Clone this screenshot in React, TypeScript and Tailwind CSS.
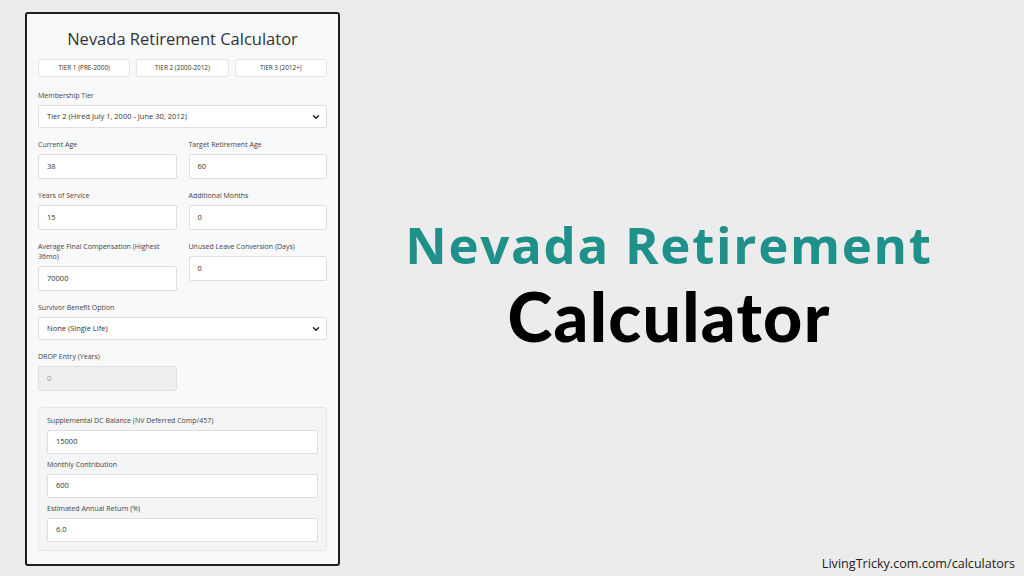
import { ChevronDown } from 'lucide-react';

const labelCls = 'block text-[7px] leading-[10px] text-[#444]';
const inputCls =
    'mt-1 flex h-[25px] w-full items-center rounded-[2px] border border-[#dcdfe3] bg-white px-2 text-[7.5px] text-[#333]';

const Field: React.FC<{ label: string; value: string; disabled?: boolean; small?: boolean }> = ({
    label,
    value,
    disabled,
    small,
}) => (
    <div>
        <span className={labelCls}>{label}</span>
        <div
            className={
                'mt-1 flex w-full items-center rounded-[2px] border border-[#dcdfe3] px-2 text-[7.5px] ' +
                (small ? 'h-[24px] ' : 'h-[25px] ') +
                (disabled ? 'bg-[#efefef] text-[#999]' : 'bg-white text-[#333]')
            }
        >
            {value}
        </div>
    </div>
);

const SelectBox: React.FC<{ label: string; value: string }> = ({ label, value }) => (
    <div>
        <span className={labelCls}>{label}</span>
        <div className="mt-1 flex h-[23px] w-full items-center justify-between rounded-[2px] border border-[#dcdfe3] bg-white pl-2 pr-[5px] text-[7.5px] text-[#333]">
            <span>{value}</span>
            <ChevronDown size={10} strokeWidth={3.5} className="text-[#222]" />
        </div>
    </div>
);

export default function App() {
    return (
        <div
            className="flex h-[576px] w-[1024px] bg-[#ececec]"
            style={{ fontFamily: '"Open Sans", "Liberation Sans", sans-serif' }}
        >
            <div className="ml-[25px] mt-[12px] h-[554px] w-[315px] rounded-[3px] border-2 border-[#1e1e1e] bg-[#f8f9fa] px-[11px] pt-[13px]">
                <h1 className="text-center text-[16.5px] leading-[24px] text-[#333]">Nevada Retirement Calculator</h1>

                <div className="mt-2 grid grid-cols-3 gap-[6px]">
                    {['TIER 1 (PRE-2000)', 'TIER 2 (2000-2012)', 'TIER 3 (2012+)'].map((t) => (
                        <div
                            key={t}
                            className="flex h-[18px] items-center justify-center rounded-[2px] border border-[#e2e4e7] bg-white text-[6.4px] text-[#333]"
                        >
                            {t}
                        </div>
                    ))}
                </div>

                <div className="mt-[14px] flex flex-col gap-3">
                    <SelectBox label="Membership Tier" value="Tier 2 (Hired July 1, 2000 - June 30, 2012)" />

                    <div className="grid grid-cols-2 gap-x-3">
                        <Field label="Current Age" value="38" />
                        <Field label="Target Retirement Age" value="60" />
                    </div>

                    <div className="grid grid-cols-2 gap-x-3">
                        <Field label="Years of Service" value="15" />
                        <Field label="Additional Months" value="0" />
                    </div>

                    <div className="grid grid-cols-2 items-start gap-x-3">
                        <div>
                            <span className={labelCls}>Average Final Compensation (Highest 36mo)</span>
                            <div className={inputCls}>70000</div>
                        </div>
                        <Field label="Unused Leave Conversion (Days)" value="0" />
                    </div>

                    <SelectBox label="Survivor Benefit Option" value="None (Single Life)" />

                    <div className="grid grid-cols-2 gap-x-3">
                        <Field label="DROP Entry (Years)" value="0" disabled />
                    </div>

                    <div className="mt-1 flex flex-col gap-[6px] rounded-[3px] border border-[#e6e7e9] bg-[#f4f5f6] px-2 pb-2 pt-2">
                        <Field label="Supplemental DC Balance (NV Deferred Comp/457)" value="15000" small />
                        <Field label="Monthly Contribution" value="600" small />
                        <Field label="Estimated Annual Return (%)" value="6.0" small />
                    </div>
                </div>
            </div>

            <div className="flex flex-1 flex-col">
                <div className="flex flex-1 flex-col items-center justify-center pr-[26px] pt-[20px]">
                    <h2
                        className="text-[51px] font-bold leading-[56px] tracking-[1.7px] text-[#1f918a]"
                        style={{ fontFamily: '"Open Sans", sans-serif' }}
                    >
                        Nevada Retirement
                    </h2>
                    <h2
                        className="text-[68px] font-black leading-[88px] tracking-[1.3px] text-black"
                        style={{ fontFamily: 'Lato, sans-serif' }}
                    >
                        Calculator
                    </h2>
                </div>
                <div className="pb-[3px] pr-[9px] text-right text-[12.6px] leading-[18px] text-[#222]">
                    LivingTricky.com.com/calculators
                </div>
            </div>
        </div>
    );
}
